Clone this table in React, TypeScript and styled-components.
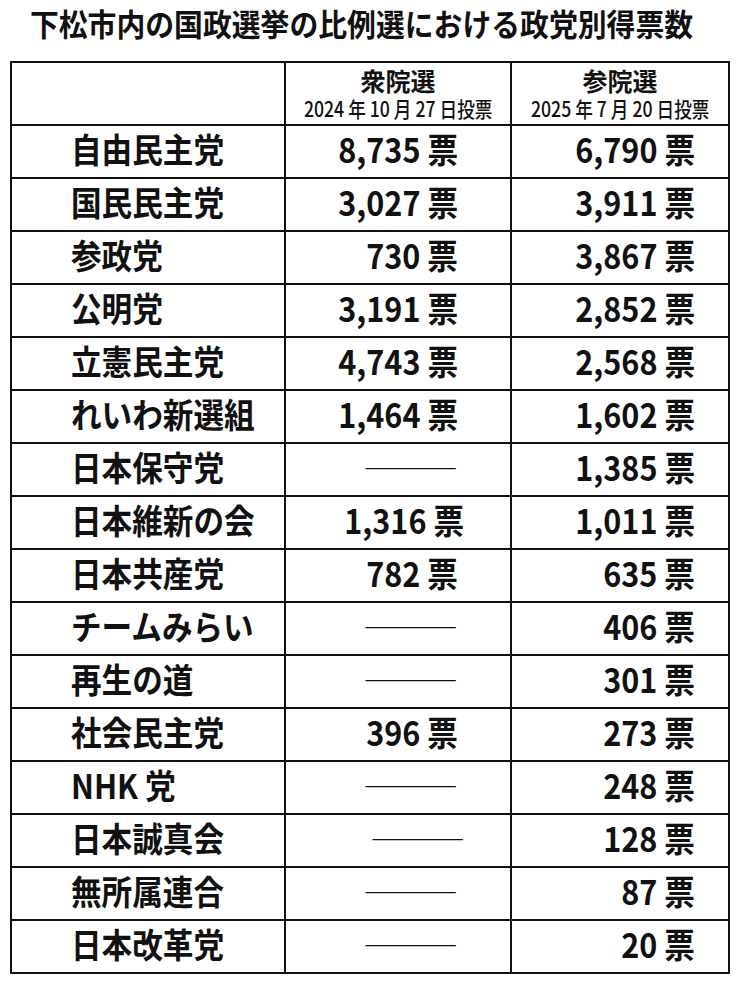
import styled, { createGlobalStyle } from 'styled-components'

const GlobalStyle = createGlobalStyle`
  body {
    margin: 0;
    background: #fff;
    color: #111;
    font-family: 'Noto Sans CJK JP', 'Noto Sans', sans-serif;
  }
`

const Page = styled.div`
  width: 738px;
  padding: 0 10px;
  box-sizing: border-box;
`

const Title = styled.h1`
  margin: 0;
  height: 45px;
  padding-right: 16px;
  display: flex;
  align-items: center;
  justify-content: center;
  font-size: 31px;
  font-weight: 700;
  line-height: 1;
  white-space: nowrap;
  & > span {
    display: inline-block;
    transform: scaleX(0.93);
  }
`

const Table = styled.table`
  width: 718px;
  margin-top: 16px;
  border-collapse: collapse;
  table-layout: fixed;
  border: 2px solid #111;
`

const Col = styled.col<{ $w: number }>`
  width: ${(p) => p.$w}px;
`

const HeadCell = styled.th`
  height: 58px;
  padding: 0 0 3px;
  border: 2px solid #111;
  font-weight: 400;
  vertical-align: middle;
`

const ElectionName = styled.div`
  font-size: 25px;
  font-weight: 600;
  line-height: 28px;
`

const ElectionDate = styled.div`
  margin-top: 3px;
  font-size: 21px;
  font-weight: 500;
  line-height: 22px;
  white-space: nowrap;
  & > span {
    display: inline-block;
    transform: scaleX(0.84);
  }
`

const Row = styled.tr`
  height: 53px;
`

const NameCell = styled.td`
  padding: 0 0 5px 59px;
  border: 2px solid #111;
  font-size: 34px;
  font-weight: 700;
  line-height: 1;
  white-space: nowrap;
  & > span {
    display: inline-block;
    transform: scaleX(0.9);
    transform-origin: left center;
  }
`

const VoteCell = styled.td<{ $pad: number; $nudge?: number }>`
  padding: 0 ${(p) => p.$pad - (p.$nudge ?? 0)}px 5px 0;
  border: 2px solid #111;
  text-align: right;
  font-size: 34px;
  font-weight: 700;
  line-height: 1;
  white-space: nowrap;
`

const Votes = styled.span`
  display: inline-block;
  transform: scaleX(0.9);
  transform-origin: right center;
`

const Dash = styled.span`
  display: inline-block;
  font-size: 31px;
  font-weight: 400;
  transform: scaleX(1.02);
  transform-origin: right center;
  position: relative;
  top: -1px;
`

type Party = {
  name: string
  shu?: string
  san: string
  nudge?: number
}

const parties: Party[] = [
  { name: '自由民主党', shu: '8,735', san: '6,790' },
  { name: '国民民主党', shu: '3,027', san: '3,911' },
  { name: '参政党', shu: '730', san: '3,867' },
  { name: '公明党', shu: '3,191', san: '2,852' },
  { name: '立憲民主党', shu: '4,743', san: '2,568' },
  { name: 'れいわ新選組', shu: '1,464', san: '1,602' },
  { name: '日本保守党', san: '1,385' },
  { name: '日本維新の会', shu: '1,316', san: '1,011', nudge: 6 },
  { name: '日本共産党', shu: '782', san: '635' },
  { name: 'チームみらい', san: '406' },
  { name: '再生の道', san: '301' },
  { name: '社会民主党', shu: '396', san: '273' },
  { name: 'NHK 党', san: '248' },
  { name: '日本誠真会', san: '128', nudge: 7 },
  { name: '無所属連合', san: '87' },
  { name: '日本改革党', san: '20' },
]

export default function App() {
  return (
    <>
      <GlobalStyle />
      <Page>
        <Title>
          <span>下松市内の国政選挙の比例選における政党別得票数</span>
        </Title>
        <Table>
          <colgroup>
            <Col $w={274} />
            <Col $w={226} />
            <Col $w={218} />
          </colgroup>
          <thead>
            <tr>
              <HeadCell />
              <HeadCell>
                <ElectionName>衆院選</ElectionName>
                <ElectionDate>
                  <span>2024 年 10 月 27 日投票</span>
                </ElectionDate>
              </HeadCell>
              <HeadCell>
                <ElectionName>参院選</ElectionName>
                <ElectionDate>
                  <span>2025 年 7 月 20 日投票</span>
                </ElectionDate>
              </HeadCell>
            </tr>
          </thead>
          <tbody>
            {parties.map((p) => (
              <Row key={p.name}>
                <NameCell>
                  <span>{p.name}</span>
                </NameCell>
                <VoteCell $pad={52} $nudge={p.nudge}>
                  {p.shu ? <Votes>{p.shu} 票</Votes> : <Dash>―――</Dash>}
                </VoteCell>
                <VoteCell $pad={33}>
                  <Votes>{p.san} 票</Votes>
                </VoteCell>
              </Row>
            ))}
          </tbody>
        </Table>
      </Page>
    </>
  )
}
